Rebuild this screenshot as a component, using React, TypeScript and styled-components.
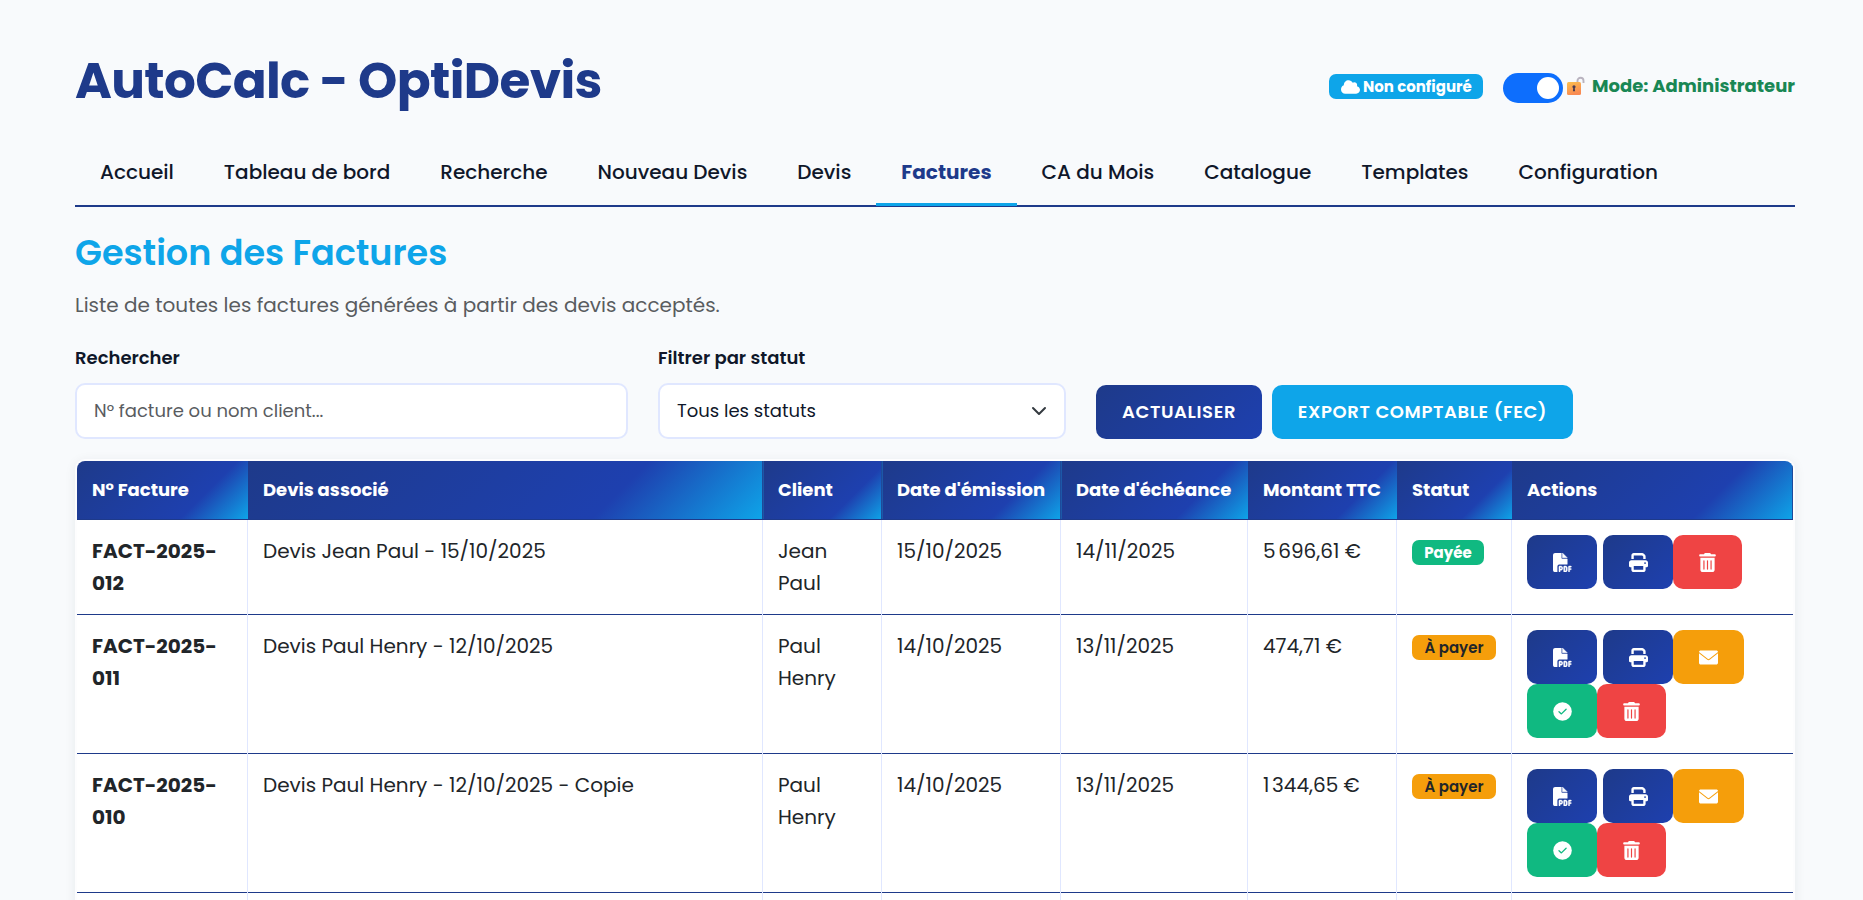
import React from "react";
import styled, { createGlobalStyle, css } from "styled-components";
import { FaFilePdf, FaPrint, FaTrashCan, FaCloud } from "react-icons/fa6";

const GlobalStyle = createGlobalStyle`
  *, *::before, *::after { box-sizing: border-box; }
  html, body { margin: 0; height: 900px; overflow: hidden; }
  body {
    background: #f8fafc;
    color: #212529;
    font-family: Poppins, Inter, "Liberation Sans", sans-serif;
  }
`;

const Page = styled.div`
  height: 900px;
  overflow: hidden;
  padding: 40px 68px 0 75px;
`;

const Header = styled.header`
  display: flex;
  justify-content: space-between;
  align-items: center;
  height: 81px;
`;

const Title = styled.h1`
  margin: 0;
  font-size: 50px;
  line-height: 60px;
  font-weight: 700;
  letter-spacing: -0.625px;
  color: #1e3a8a;
  white-space: nowrap;
`;

const Status = styled.div`
  display: flex;
  align-items: center;
  padding-top: 14px;
`;

const CloudBadge = styled.span`
  display: flex;
  align-items: center;
  gap: 3px;
  width: 154px;
  height: 25px;
  margin: 0 20px 2px 0;
  padding-left: 12px;
  border-radius: 7px;
  background: #0ea5e9;
  color: #fff;
  font-size: 15px;
  font-weight: 700;
  white-space: nowrap;
`;

const CloudIcon = styled(FaCloud)`
  width: 19px;
  height: 16px;
  flex: none;
`;

const Switch = styled.span`
  display: flex;
  align-items: center;
  justify-content: flex-end;
  width: 60px;
  height: 30px;
  padding-right: 4px;
  border-radius: 15px;
  background: #0d6efd;
`;

const Knob = styled.span`
  width: 22px;
  height: 22px;
  border-radius: 50%;
  background: #fff;
`;

const Mode = styled.span`
  display: flex;
  align-items: center;
  justify-content: space-between;
  width: 232px;
  padding-left: 3px;
  margin-bottom: 4px;
  line-height: 24px;
  font-size: 18px;
  font-weight: 700;
  color: #198754;
  white-space: nowrap;
`;

const Lock = styled.svg`
  width: 20px;
  height: 20px;
`;

const Nav = styled.nav`
  display: flex;
  height: 66px;
  margin-top: 20px;
  border-bottom: 2px solid #1e3a8a;
`;

const Tab = styled.a<{ $active?: boolean }>`
  flex: none;
  height: 65px;
  padding: 0 25px;
  line-height: 63px;
  font-size: 20px;
  font-weight: 500;
  color: #0f172a;
  white-space: nowrap;
  border-bottom: 3px solid transparent;
  ${(p) =>
    p.$active &&
    css`
      font-weight: 700;
      color: #1e3a8a;
      border-bottom-color: #0ea5e9;
    `}
`;

const Heading = styled.h2`
  margin: 23px 0 0;
  font-size: 35px;
  line-height: 45px;
  font-weight: 600;
  color: #0ea5e9;
`;

const Lead = styled.p`
  margin: 14px 0 0;
  font-size: 20px;
  line-height: 32px;
  color: #595c5f;
`;

const Filters = styled.div`
  display: flex;
  align-items: flex-end;
  margin-top: 23px;
`;

const Field = styled.div<{ $w: number; $gap: number }>`
  width: ${(p) => p.$w}px;
  margin-right: ${(p) => p.$gap}px;
`;

const Label = styled.label`
  display: block;
  margin-bottom: 11px;
  font-size: 18px;
  line-height: 28px;
  font-weight: 600;
  color: #0f172a;
`;

const Control = styled.div<{ $placeholder?: boolean }>`
  display: flex;
  align-items: center;
  justify-content: space-between;
  height: 56px;
  padding: 0 17px 1px;
  border: 2px solid #e0e7ff;
  border-radius: 10px;
  background: #fff;
  font-size: 18px;
  color: ${(p) => (p.$placeholder ? "#595c5f" : "#0f172a")};
`;

const Chevron = styled.svg`
  width: 16px;
  height: 16px;
  fill: none;
  stroke: #343a40;
  stroke-width: 2;
  stroke-linecap: round;
  stroke-linejoin: round;
`;

const blueGradient = "linear-gradient(135deg, #1e3a8a, #1e40af)";

const Button = styled.button<{ $w: number; $bg: string }>`
  width: ${(p) => p.$w}px;
  height: 54px;
  margin: 0 10px 0 0;
  padding: 0 0 1px;
  border: 0;
  border-radius: 10px;
  background: ${(p) => p.$bg};
  color: #fff;
  font: inherit;
  font-size: 18px;
  font-weight: 600;
  letter-spacing: 0.625px;
  white-space: nowrap;
`;

const TableFrame = styled.div`
  margin-top: 20px;
  border: 2px solid #fdfdfe;
  border-radius: 10px;
  background: #fff;
  overflow: hidden;
  box-shadow: 0 2px 12px rgba(30, 41, 59, 0.07);
`;

const Table = styled.table`
  width: 1716px;
  table-layout: fixed;
  border-collapse: separate;
  border-spacing: 0;
`;

const Col = styled.col<{ $w: number }>`
  width: ${(p) => p.$w}px;
`;

const Th = styled.th<{ $edge?: boolean; $after?: boolean }>`
  height: 59px;
  padding: 0 0 2px 15px;
  text-align: left;
  font-size: 18px;
  font-weight: 700;
  color: #fff;
  white-space: nowrap;
  background: linear-gradient(135deg, #1e3a8a 0%, #1e40af 70%, #0ea5e9 100%);
  box-shadow: inset 0 -1px #1e3a8a
    ${(p) => (p.$edge ? ", inset -1px 0 #1e4a9a" : "")}
    ${(p) => (p.$after ? ", inset 1px 0 #1c58a8" : "")};
`;

const Td = styled.td`
  padding: 15px 0 16px 15px;
  vertical-align: top;
  line-height: 32px;
  font-size: 20px;
  box-shadow: inset -1px 0 #e0e7ff, inset 0 -1px #1e3a8a;
  &:last-child { box-shadow: inset 0 -1px #1e3a8a; }
`;

const TextWrap = styled.div`
  width: 88px;
`;

const InvoiceNo = styled.strong`
  display: block;
  width: 140px;
  font-weight: 700;
`;

const Badge = styled.span<{ $paid: boolean }>`
  display: flex;
  align-items: center;
  justify-content: center;
  width: ${(p) => (p.$paid ? 72 : 84)}px;
  height: 25px;
  margin-top: 5px;
  border-radius: 7px;
  font-size: 15px;
  line-height: 25px;
  font-weight: ${(p) => (p.$paid ? 700 : 600)};
  white-space: nowrap;
  background: ${(p) => (p.$paid ? "#10b981" : "#f59e0b")};
  color: ${(p) => (p.$paid ? "#fff" : "#212529")};
`;

const Actions = styled.div`
  display: flex;
  flex-wrap: wrap;
  width: 230px;
  min-height: 64px;
  align-content: flex-start;
`;

const Action = styled.button<{ $bg: string; $w?: number; $gap?: number }>`
  display: flex;
  align-items: center;
  justify-content: center;
  width: ${(p) => p.$w ?? 70}px;
  height: 54px;
  margin: 0 ${(p) => p.$gap ?? 0}px 0 0;
  padding: 0;
  border: 0;
  border-radius: 10px;
  background: ${(p) => p.$bg};
  color: #fff;
  svg { height: 19px; width: 19px; }
`;

const PdfIcon = styled(FaFilePdf)`
  stroke: currentColor;
  stroke-width: 12;
`;

const LockIcon = () => (
  <Lock viewBox="0 0 20 20" role="img" aria-label="Déverrouillé">
    <defs>
      <linearGradient id="lockBody" x1="0" y1="0" x2="0.4" y2="1">
        <stop offset="0" stopColor="#fcc04d" />
        <stop offset="1" stopColor="#f98a52" />
      </linearGradient>
    </defs>
    <path d="M11.500 7V4.800a3 3 0 0 1 6 0V7" fill="none" stroke="#b9b3bf" strokeWidth="1.900" />
    <rect x="1" y="6" width="14" height="13" rx="1.500" fill="url(#lockBody)" />
    <circle cx="8" cy="10.800" r="1.600" fill="#4a3a52" />
    <path d="M7.300 11.500h1.400l.4 3.800H6.900z" fill="#4a3a52" />
  </Lock>
);

const MailIcon = () => (
  <svg viewBox="0 0 19 19" fill="currentColor">
    <path d="M1.8 2.5h15.400c1 0 1.800.7 1.800 1.600l-8.600 6.700a1.500 1.500 0 0 1-1.800 0L0 4.100c0-.9.8-1.600 1.800-1.600Z" />
    <path d="M0 5.300l8 6.300a2.400 2.400 0 0 0 3 0l8-6.300v9.400c0 1-.8 1.800-1.800 1.800H1.800c-1 0-1.800-.8-1.800-1.800Z" />
  </svg>
);

const CheckIcon = () => (
  <svg viewBox="0 0 19 19">
    <circle cx="9.5" cy="9.500" r="9.300" fill="currentColor" />
    <path d="M6 9.700l2.400 2.200 4.700-4.600" fill="none" stroke="#10b981" strokeWidth="1.300" strokeLinecap="round" strokeLinejoin="round" />
  </svg>
);

const tabs = [
  "Accueil",
  "Tableau de bord",
  "Recherche",
  "Nouveau Devis",
  "Devis",
  "Factures",
  "CA du Mois",
  "Catalogue",
  "Templates",
  "Configuration",
];

const columns: [string, number][] = [
  ["N° Facture", 171],
  ["Devis associé", 515],
  ["Client", 119],
  ["Date d'émission", 179],
  ["Date d'échéance", 187],
  ["Montant TTC", 149],
  ["Statut", 115],
  ["Actions", 281],
];

interface Invoice {
  id: string;
  quote: string;
  client: string;
  issued: string;
  due: string;
  amount: string;
  paid: boolean;
}

const invoices: Invoice[] = [
  { id: "FACT-2025-012", quote: "Devis Jean Paul - 15/10/2025", client: "Jean Paul", issued: "15/10/2025", due: "14/11/2025", amount: "5\u202f696,61\u00a0€", paid: true },
  { id: "FACT-2025-011", quote: "Devis Paul Henry - 12/10/2025", client: "Paul Henry", issued: "14/10/2025", due: "13/11/2025", amount: "474,71\u00a0€", paid: false },
  { id: "FACT-2025-010", quote: "Devis Paul Henry - 12/10/2025 - Copie", client: "Paul Henry", issued: "14/10/2025", due: "13/11/2025", amount: "1\u202f344,65\u00a0€", paid: false },
];

function InvoiceRow({ inv }: { inv: Invoice }) {
  return (
    <tr>
      <Td>
        <InvoiceNo>{inv.id}</InvoiceNo>
      </Td>
      <Td>{inv.quote}</Td>
      <Td>
        <TextWrap>{inv.client}</TextWrap>
      </Td>
      <Td>{inv.issued}</Td>
      <Td>{inv.due}</Td>
      <Td>{inv.amount}</Td>
      <Td>
        <Badge $paid={inv.paid}>{inv.paid ? "Payée" : "À payer"}</Badge>
      </Td>
      <Td>
        <Actions>
          <Action $bg={blueGradient} $gap={6}><PdfIcon /></Action>
          <Action $bg={blueGradient}><FaPrint /></Action>
          {!inv.paid && (
            <>
              <Action $bg="#f59e0b" $w={71}><MailIcon /></Action>
              <Action $bg="#10b981"><CheckIcon /></Action>
            </>
          )}
          <Action $bg="#ef4444" $w={69}><FaTrashCan /></Action>
        </Actions>
      </Td>
    </tr>
  );
}

export default function App() {
  return (
    <Page>
      <GlobalStyle />
      <Header>
        <Title>AutoCalc - OptiDevis</Title>
        <Status>
          <CloudBadge>
            <CloudIcon />
            Non configuré
          </CloudBadge>
          <Switch>
            <Knob />
          </Switch>
          <Mode>
            <LockIcon />
            <span>Mode: Administrateur</span>
          </Mode>
        </Status>
      </Header>
      <Nav>
        {tabs.map((name) => (
          <Tab key={name} $active={name === "Factures"}>
            {name}
          </Tab>
        ))}
      </Nav>
      <Heading>Gestion des Factures</Heading>
      <Lead>Liste de toutes les factures générées à partir des devis acceptés.</Lead>
      <Filters>
        <Field $w={553} $gap={30}>
          <Label>Rechercher</Label>
          <Control $placeholder>N° facture ou nom client...</Control>
        </Field>
        <Field $w={408} $gap={30}>
          <Label>Filtrer par statut</Label>
          <Control>
            Tous les statuts
            <Chevron viewBox="0 0 16 16">
              <path d="m2 5 6 6 6-6" />
            </Chevron>
          </Control>
        </Field>
        <Button $w={166} $bg={blueGradient}>ACTUALISER</Button>
        <Button $w={301} $bg="#0ea5e9">EXPORT COMPTABLE (FEC)</Button>
      </Filters>
      <TableFrame>
        <Table>
          <colgroup>
            {columns.map(([name, w]) => (
              <Col key={name} $w={w} />
            ))}
          </colgroup>
          <thead>
            <tr>
              {columns.map(([name], i) => (
                <Th key={name} $edge={[1, 2, 3, 7].includes(i)} $after={[2, 3, 4].includes(i)}>
                  {name}
                </Th>
              ))}
            </tr>
          </thead>
          <tbody>
            {invoices.map((inv) => (
              <InvoiceRow key={inv.id} inv={inv} />
            ))}
            <tr>
              {columns.map(([name]) => (
                <Td key={name} />
              ))}
            </tr>
          </tbody>
        </Table>
      </TableFrame>
    </Page>
  );
}
